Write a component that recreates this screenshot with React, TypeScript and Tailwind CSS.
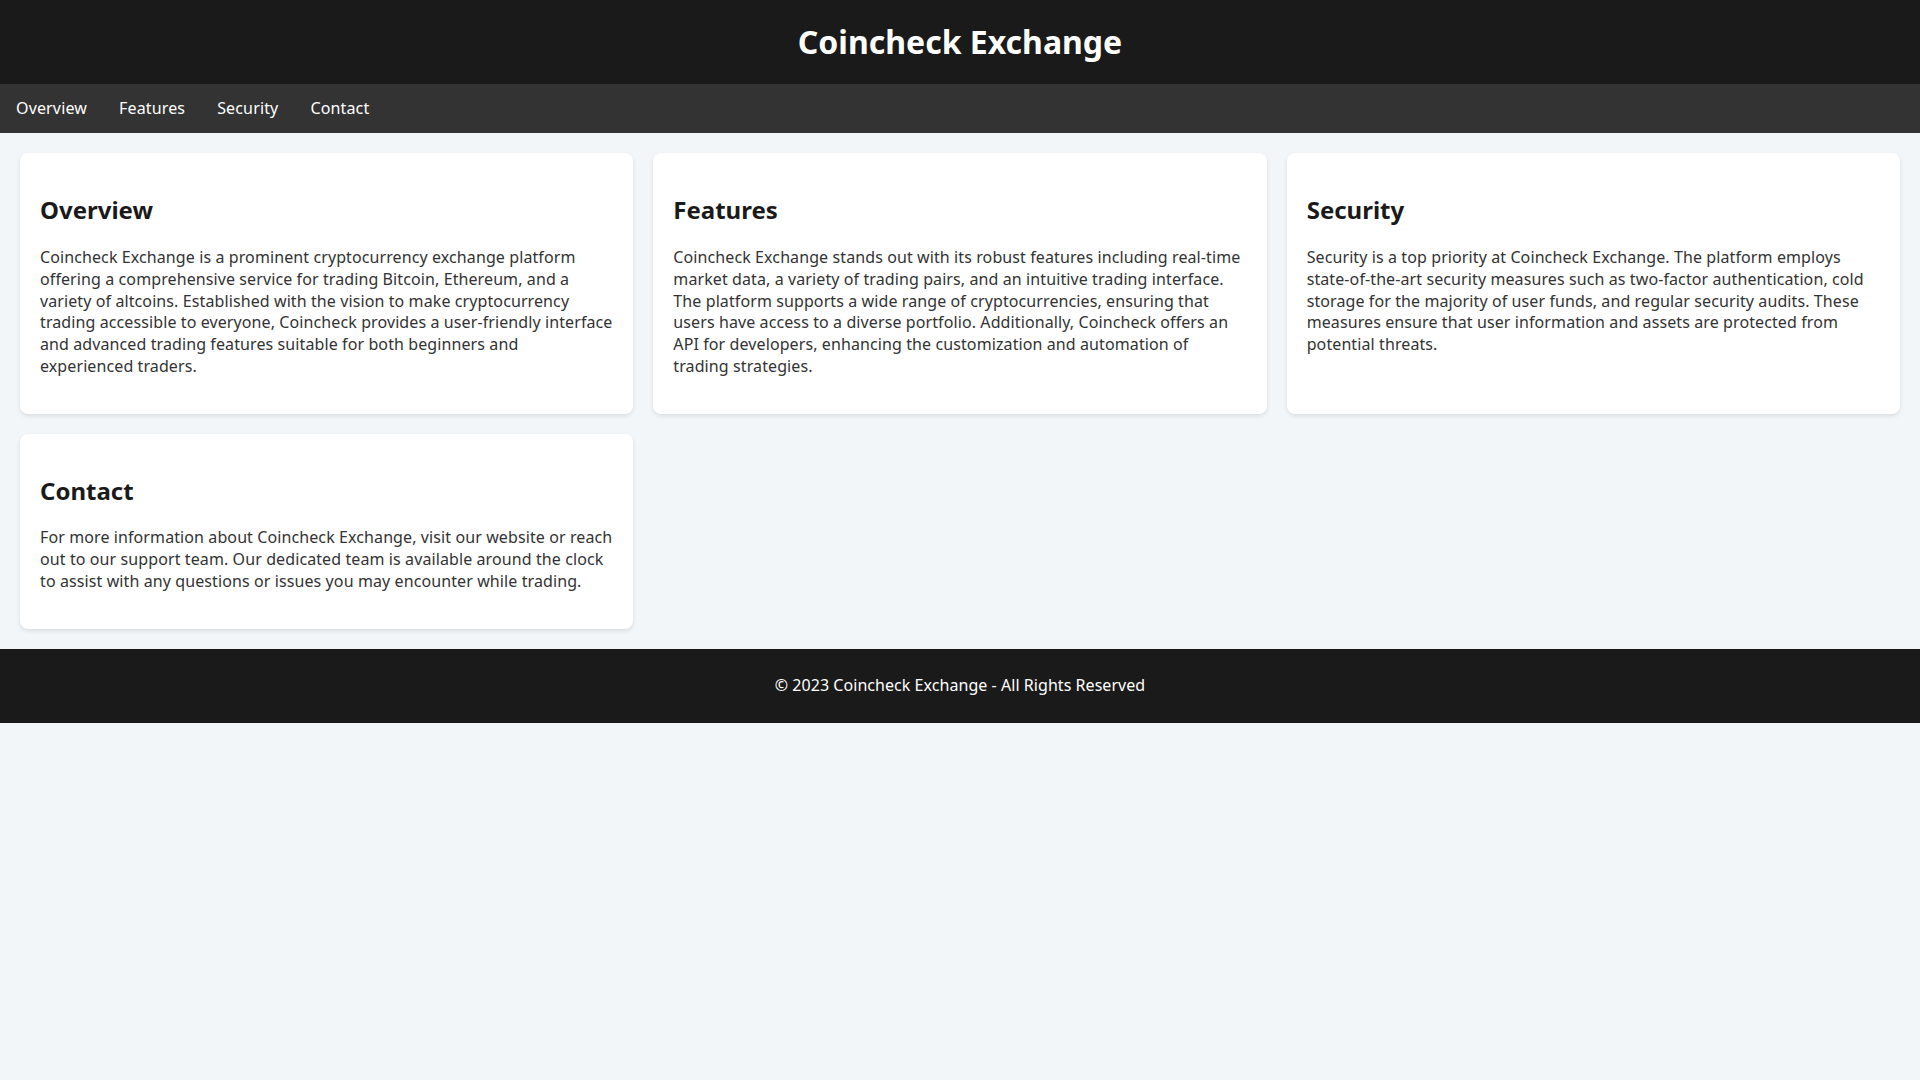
import React from 'react';

interface Section {
  id: string;
  title: string;
  body: string;
}

const sections: Section[] = [
  {
    id: 'overview',
    title: 'Overview',
    body: 'Coincheck Exchange is a prominent cryptocurrency exchange platform offering a comprehensive service for trading Bitcoin, Ethereum, and a variety of altcoins. Established with the vision to make cryptocurrency trading accessible to everyone, Coincheck provides a user-friendly interface and advanced trading features suitable for both beginners and experienced traders.',
  },
  {
    id: 'features',
    title: 'Features',
    body: 'Coincheck Exchange stands out with its robust features including real-time market data, a variety of trading pairs, and an intuitive trading interface. The platform supports a wide range of cryptocurrencies, ensuring that users have access to a diverse portfolio. Additionally, Coincheck offers an API for developers, enhancing the customization and automation of trading strategies.',
  },
  {
    id: 'security',
    title: 'Security',
    body: 'Security is a top priority at Coincheck Exchange. The platform employs state-of-the-art security measures such as two-factor authentication, cold storage for the majority of user funds, and regular security audits. These measures ensure that user information and assets are protected from potential threats.',
  },
  {
    id: 'contact',
    title: 'Contact',
    body: 'For more information about Coincheck Exchange, visit our website or reach out to our support team. Our dedicated team is available around the clock to assist with any questions or issues you may encounter while trading.',
  },
];

export default function App() {
  return (
    <div className="min-h-screen bg-[#f3f6f9] font-['Noto_Sans',sans-serif] text-[16px] leading-[1.362]">
      {/* header */}
      <header className="bg-[#1a1a1a] py-5 text-center text-white">
        <h1 className="text-[32px] leading-[1.362] font-bold">Coincheck Exchange</h1>
      </header>

      {/* nav */}
      <nav className="flex bg-[#333333]">
        {sections.map((s) => (
          <a
            key={s.id}
            href={`#${s.id}`}
            className="px-4 py-[14px] tracking-[0.15px] text-white"
          >
            {s.title}
          </a>
        ))}
      </nav>

      {/* cards */}
      <main className="grid grid-cols-3 gap-5 p-5">
        {sections.map((s) => (
          <section
            key={s.id}
            id={s.id}
            className="rounded-lg bg-white px-5 pt-[21px] pb-5 shadow-[0_2px_4px_rgba(0,0,0,0.1)]"
          >
            <h2 className="my-5 text-[24px] leading-[1.362] font-bold text-[#1a1a1a]">{s.title}</h2>
            <p className="mb-4 tracking-[0.1px] text-[#333333]">{s.body}</p>
          </section>
        ))}
      </main>

      {/* footer */}
      <footer className="bg-[#1a1a1a] py-[26px] text-center tracking-[0.05px] text-white">
        © 2023 Coincheck Exchange - All Rights Reserved
      </footer>
    </div>
  );
}
